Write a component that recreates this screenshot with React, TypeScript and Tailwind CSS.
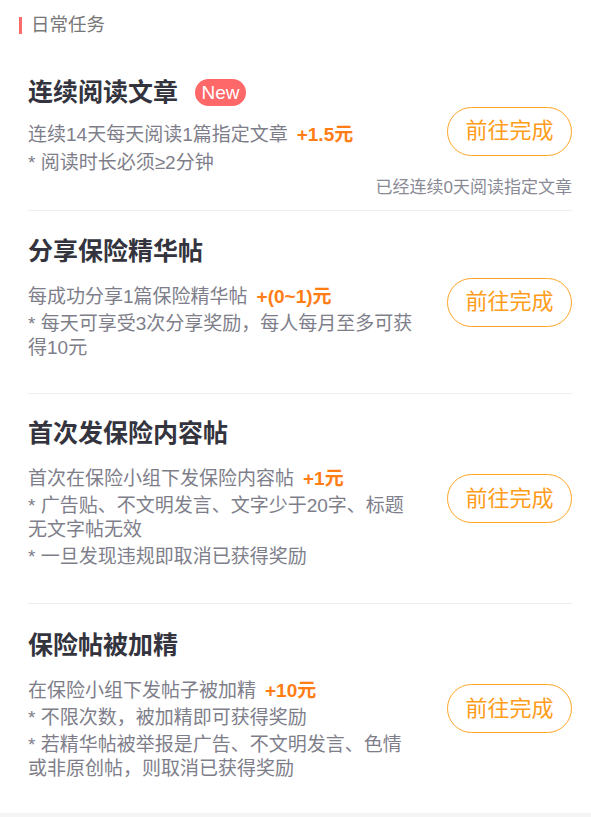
import React from "react";

const FONT = '"Liberation Sans", Arial, "Noto Sans CJK SC", sans-serif';

function Btn() {
  return (
    <button className="shrink-0 w-[125px] h-[49px] rounded-full border-[1.5px] border-[#ffa425] text-[#ff9c1a] text-[22px] leading-none flex items-center justify-center">
      前往完成
    </button>
  );
}

function Reward({ children }: { children: React.ReactNode }) {
  return <span className="ml-[9px] font-bold text-[#ff7d14]">{children}</span>;
}

type Task = {
  title: string;
  desc: string;
  reward: string;
  notes: string[];
  pt: string;
  pb: string;
};

const tasks: Task[] = [
  {
    title: "分享保险精华帖",
    desc: "每成功分享1篇保险精华帖",
    reward: "+(0~1)元",
    notes: ["* 每天可享受3次分享奖励，每人每月至多可获得10元"],
    pt: "pt-[23px]",
    pb: "pb-[33px]",
  },
  {
    title: "首次发保险内容帖",
    desc: "首次在保险小组下发保险内容帖",
    reward: "+1元",
    notes: ["* 广告贴、不文明发言、文字少于20字、标题无文字帖无效", "* 一旦发现违规即取消已获得奖励"],
    pt: "pt-[22px]",
    pb: "pb-[34px]",
  },
  {
    title: "保险帖被加精",
    desc: "在保险小组下发帖子被加精",
    reward: "+10元",
    notes: ["* 不限次数，被加精即可获得奖励", "* 若精华帖被举报是广告、不文明发言、色情或非原创帖，则取消已获得奖励"],
    pt: "pt-[24px]",
    pb: "pb-[32px]",
  },
];

export default function App() {
  return (
    <div className="w-[591px] min-h-[817px] bg-[#f5f5f5]" style={{ fontFamily: FONT }}>
      <div className="bg-white">
        <div className="h-[52px] pl-[19px] pt-[14px] flex items-start">
          <div className="w-[3px] h-[17px] mt-[3px] bg-[#ff6b6b]" />
          <div className="ml-[9px] text-[18.5px] leading-[22px] text-[#777]">日常任务</div>
        </div>

        <div className="ml-[28px] mr-[19px] border-b border-[#efeff2] flex items-center gap-[30px]">
          <div className="flex-1 min-w-0 flex flex-col pt-[23px] pb-[10px]">
            <div className="flex items-center">
              <div className="text-[25px] leading-[34px] font-bold text-[#34343e]">连续阅读文章</div>
              <div className="ml-[17px] w-[51px] h-[27px] rounded-full bg-[#ff6868] text-white text-[19px] leading-none flex items-center justify-center">
                New
              </div>
            </div>
            <div className="mt-[14px] text-[19px] leading-[24px] text-[#7e7e8a]">
              连续14天每天阅读1篇指定文章<Reward>+1.5元</Reward>
            </div>
            <div className="mt-[4px] text-[19px] leading-[24px] text-[#7e7e8a]">* 阅读时长必须≥2分钟</div>
            <div className="mt-[1px] -mr-[155px] text-right text-[17px] leading-[24px] text-[#8a8a96]">
              已经连续0天阅读指定文章
            </div>
          </div>
          <Btn />
        </div>

        {tasks.map((t, i) => (
          <div
            key={t.title}
            className={
              i < tasks.length - 1
                ? "ml-[28px] mr-[19px] border-b border-[#efeff2] flex items-center gap-[30px]"
                : "ml-[28px] mr-[19px] flex items-center gap-[30px]"
            }
          >
            <div className={`flex-1 min-w-0 flex flex-col ${t.pt} ${t.pb}`}>
              <div className="text-[25px] leading-[34px] font-bold text-[#34343e]">{t.title}</div>
              <div className="mt-[17px] text-[19px] leading-[24px] text-[#7e7e8a]">
                {t.desc}
                <Reward>{t.reward}</Reward>
              </div>
              {t.notes.map((n) => (
                <div key={n} className="mt-[3px] text-[19px] leading-[24px] text-[#7e7e8a]">
                  {n}
                </div>
              ))}
            </div>
            <Btn />
          </div>
        ))}
      </div>
    </div>
  );
}
